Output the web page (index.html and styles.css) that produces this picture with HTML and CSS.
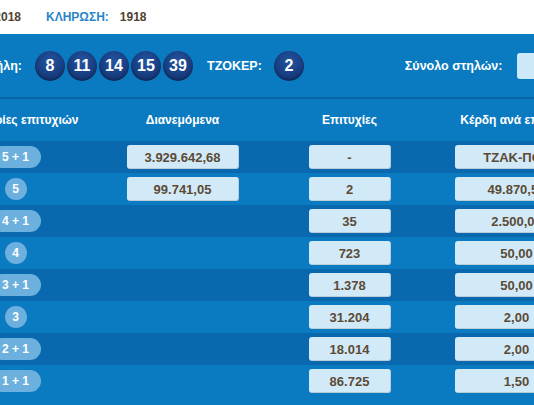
FILE: index.html
```html
<!DOCTYPE html>
<html lang="el">
<head>
<meta charset="utf-8">
<link rel="stylesheet" href="styles.css">
</head>
<body>
<div class="page">
  <div class="info">
    <div class="info-date"><span class="info-label">ΗΜΕΡΟΜΗΝΙΑ:</span><span class="info-value">21/07/2018</span></div>
    <span class="info-label">ΚΛΗΡΩΣΗ:</span><span class="info-value">1918</span>
  </div>
  <div class="draw">
    <div class="draw-label">Νικήτρια στήλη:</div>
    <div class="balls">
      <span class="ball">8</span><span class="ball">11</span><span class="ball">14</span><span class="ball">15</span><span class="ball">39</span>
    </div>
    <span class="joker-label">ΤΖΟΚΕΡ:</span>
    <span class="ball">2</span>
    <span class="total-label">Σύνολο στηλών:</span>
    <span class="total-box"></span>
  </div>
  <div class="table">
    <div class="row head">
      <div class="cell">Κατηγορίες επιτυχιών</div>
      <div class="cell">Διανεμόμενα</div>
      <div class="cell">Επιτυχίες</div>
      <div class="cell">Κέρδη ανά επιτυχία</div>
    </div>
    <div class="row dark">
      <div class="cell"><span class="pill">5 + 1</span></div>
      <div class="cell"><span class="box box-wide">3.929.642,68</span></div>
      <div class="cell"><span class="box">-</span></div>
      <div class="cell"><span class="box box-prize">ΤΖΑΚ-ΠΟΤ</span></div>
    </div>
    <div class="row">
      <div class="cell"><span class="pill round">5</span></div>
      <div class="cell"><span class="box box-wide">99.741,05</span></div>
      <div class="cell"><span class="box">2</span></div>
      <div class="cell"><span class="box box-prize">49.870,52</span></div>
    </div>
    <div class="row dark">
      <div class="cell"><span class="pill">4 + 1</span></div>
      <div class="cell"></div>
      <div class="cell"><span class="box">35</span></div>
      <div class="cell"><span class="box box-prize">2.500,00</span></div>
    </div>
    <div class="row">
      <div class="cell"><span class="pill round">4</span></div>
      <div class="cell"></div>
      <div class="cell"><span class="box">723</span></div>
      <div class="cell"><span class="box box-prize">50,00</span></div>
    </div>
    <div class="row dark">
      <div class="cell"><span class="pill">3 + 1</span></div>
      <div class="cell"></div>
      <div class="cell"><span class="box">1.378</span></div>
      <div class="cell"><span class="box box-prize">50,00</span></div>
    </div>
    <div class="row">
      <div class="cell"><span class="pill round">3</span></div>
      <div class="cell"></div>
      <div class="cell"><span class="box">31.204</span></div>
      <div class="cell"><span class="box box-prize">2,00</span></div>
    </div>
    <div class="row dark">
      <div class="cell"><span class="pill">2 + 1</span></div>
      <div class="cell"></div>
      <div class="cell"><span class="box">18.014</span></div>
      <div class="cell"><span class="box box-prize">2,00</span></div>
    </div>
    <div class="row">
      <div class="cell"><span class="pill">1 + 1</span></div>
      <div class="cell"></div>
      <div class="cell"><span class="box">86.725</span></div>
      <div class="cell"><span class="box box-prize">1,50</span></div>
    </div>
    <div class="row spacer"></div>
  </div>
</div>
</body>
</html>
```
FILE: styles.css
```css
html, body {
  margin: 0;
  padding: 0;
  overflow: hidden;
  background: #ffffff;
}
body {
  font-family: "Liberation Sans", Arial, sans-serif;
  font-weight: bold;
}
.page {
  width: 900px;
  margin-left: -68px;
}
.info {
  height: 34px;
  display: flex;
  align-items: center;
  font-size: 12px;
  white-space: nowrap;
}
.info-date {
  width: 89px;
  display: flex;
  justify-content: flex-end;
  margin-right: 25px;
}
.info-label {
  color: #2a86c7;
  margin-right: 11px;
}
.info-value {
  color: #4e4232;
}
.info-date .info-value {
  margin-right: 0;
}
.draw {
  height: 63px;
  background: #0b7bc1;
  border-bottom: 2px solid #0a63a3;
  display: flex;
  align-items: center;
  color: #ffffff;
  font-size: 12.5px;
  white-space: nowrap;
  padding-top: 1px;
  box-sizing: border-box;
  height: 65px;
}
.draw-label {
  width: 90px;
  display: flex;
  justify-content: flex-end;
  margin-right: 13px;
}
.balls {
  display: flex;
  gap: 2px;
  margin-right: 14px;
}
.ball {
  width: 30px;
  height: 30px;
  border-radius: 50%;
  background: radial-gradient(circle at 50% 35%, #2456a0 0%, #1a4288 45%, #11306b 100%);
  box-shadow: inset 0 -2px 3px rgba(0, 0, 0, 0.25);
  color: #ffffff;
  font-size: 16px;
  display: flex;
  align-items: center;
  justify-content: center;
}
.joker-label {
  margin-right: 12px;
}
.total-label {
  margin-left: 101px;
  margin-right: 15px;
}
.total-box {
  width: 60px;
  height: 26px;
  border-radius: 3px;
  background: #cde8f8;
}
.table {
  background: #0b7bc1;
}
.row {
  display: grid;
  grid-template-columns: repeat(5, 167px);
  height: 32px;
  align-items: center;
}
.row.dark {
  background: #0a69ae;
}
.row.head {
  height: 42px;
  color: #ffffff;
  font-size: 12px;
}
.row.spacer {
  height: 20px;
}
.cell {
  display: flex;
  justify-content: center;
  align-items: center;
  white-space: nowrap;
}
.pill {
  height: 22px;
  min-width: 22px;
  padding: 0 11px;
  box-sizing: border-box;
  border-radius: 11px;
  background: #6cb0de;
  color: #ffffff;
  font-size: 12px;
  display: flex;
  align-items: center;
  justify-content: center;
  width: 50px;
}
.pill.round {
  width: 22px;
  padding: 0;
}
.box {
  width: 82px;
  height: 24px;
  border-radius: 3px;
  background: #d2eaf8;
  box-shadow: inset -1px -1px 0 rgba(0, 0, 0, 0.12);
  color: #5b4b36;
  font-size: 13px;
  display: flex;
  align-items: center;
  justify-content: center;
}
.box-wide {
  width: 112px;
}
.box-prize {
  width: 124px;
}
```
